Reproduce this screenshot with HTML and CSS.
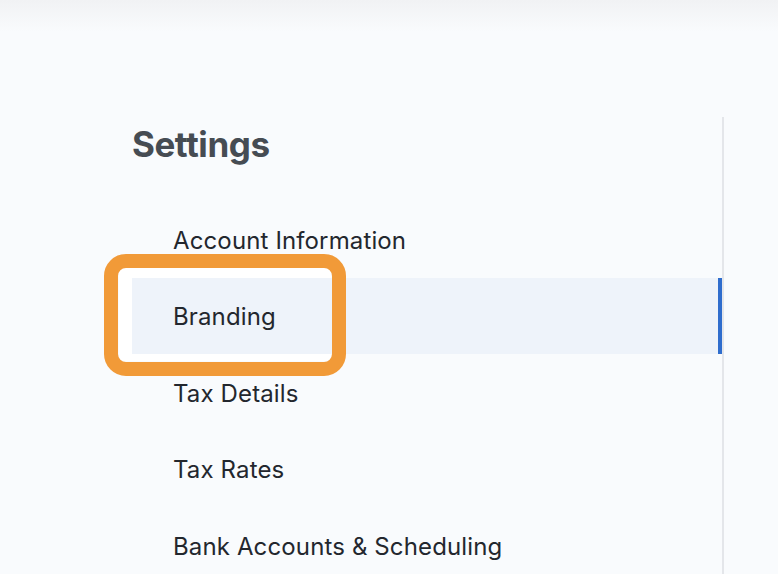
FILE: index.html
```html
<!DOCTYPE html>
<html>
<head>
<meta charset="utf-8">
<link rel="stylesheet" href="styles.css">
</head>
<body>
<div class="topshade"></div>
<div class="page">
  <aside class="sidebar">
    <h1 class="title">Settings</h1>
    <nav class="nav">
      <div class="annot-bg"></div>
      <a class="item">Account Information</a>
      <a class="item active">Branding</a>
      <a class="item">Tax Details</a>
      <a class="item">Tax Rates</a>
      <a class="item">Bank Accounts &amp; Scheduling</a>
      <div class="annot-ring"></div>
    </nav>
  </aside>
</div>
</body>
</html>
```
FILE: styles.css
```css
html, body {
  margin: 0;
  padding: 0;
  background: #f9fbfd;
  height: 100%;
  overflow: hidden;
  font-family: Inter, "Noto Sans", sans-serif;
}
.topshade {
  position: absolute;
  left: 0; right: 0; top: 0;
  height: 32px;
  background: linear-gradient(#f1f2f4, rgba(249,251,253,0));
}
.page {
  padding-top: 117px;
  padding-left: 132px;
}
.sidebar {
  width: 590px;
  border-right: 2px solid #e4e6ea;
  height: 480px;
}
.title {
  margin: 0;
  font-size: 35px;
  font-weight: 700;
  color: #464c53;
  line-height: 54px;
  letter-spacing: -0.45px;
}
.nav {
  position: relative;
  margin-top: 30px;
  display: flex;
  flex-direction: column;
}
.item {
  position: relative;
  z-index: 1;
  display: flex;
  align-items: center;
  box-sizing: border-box;
  height: 76.5px;
  padding-left: 41px;
  padding-top: 2px;
  font-size: 24px;
  letter-spacing: 0.13px;
  color: #23272e;
}
.item.active {
  background: #eef3fa;
  box-shadow: inset -4px 0 0 #2f6dcd;
}
.annot-bg {
  position: absolute;
  z-index: 0;
  left: -13px;
  top: 66.5px;
  width: 212px;
  height: 93px;
  background: #ffffff;
  border-radius: 6px;
}
.annot-ring {
  position: absolute;
  z-index: 2;
  left: -28px;
  top: 52.5px;
  width: 214px;
  height: 94px;
  border: 14px solid #f19a38;
  border-radius: 22px;
  pointer-events: none;
}
```
